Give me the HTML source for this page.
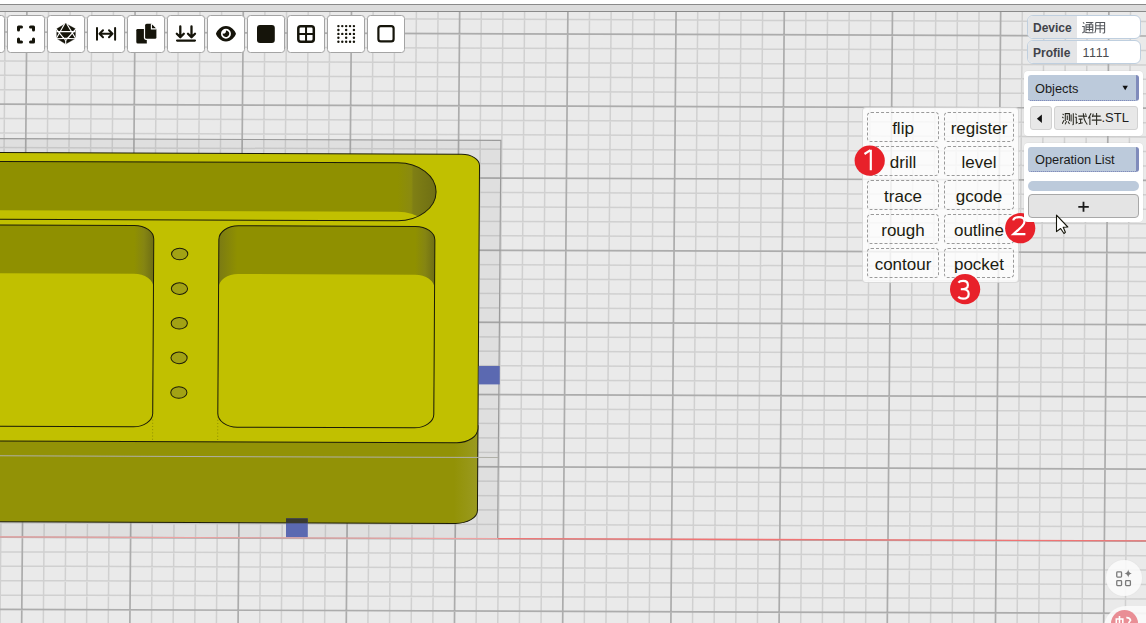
<!DOCTYPE html>
<html><head><meta charset="utf-8">
<style>
*{box-sizing:border-box;margin:0;padding:0}
html,body{width:1146px;height:623px;overflow:hidden;background:#eaeaea;font-family:"Liberation Sans",sans-serif;position:relative}
.abs{position:absolute}
#topband{left:0;top:0;width:1146px;height:12px;background:#fff}
#topband div{position:absolute;left:0;width:1146px}
.tb{position:absolute;top:15px;width:38px;height:38px;background:#fff;border:1px solid #a4a4a4;border-radius:3.5px}
.tb svg{position:absolute;left:0;top:0}
#menu{left:862px;top:107px;width:157px;height:176px;background:rgba(255,255,255,0.8);border:1px solid rgba(0,0,0,0.13);border-radius:4px}
.mb{position:absolute;height:30px;border:1px dashed #9a9a9a;border-radius:4px;font-size:17px;color:#1c1c10;text-align:center;line-height:32px}
.num{position:absolute;width:30px;height:30px;border-radius:50%;background:#e8202a;color:#fff;font-size:27px;line-height:30px;text-align:center}
.pnl{position:absolute;background:#fff;border-radius:4px}
.hdr{position:absolute;background:#bccadb;border-right:3px solid #7f8bbb;border-bottom:1px dotted #6a76b0;border-radius:3px;font-size:13.5px;color:#1a1a1a;line-height:25px;padding-left:7px}
</style></head><body>
<svg class="abs" style="left:0;top:0" width="1146" height="623">
<path d="M5.34 0L0.04 623 M48.62 0L43.32 623 M70.25 0L64.96 623 M91.90 0L86.60 623 M113.53 0L108.24 623 M156.81 0L151.52 623 M178.46 0L173.16 623 M200.09 0L194.80 623 M221.73 0L216.44 623 M265.02 0L259.72 623 M286.66 0L281.36 623 M308.30 0L303.00 623 M329.94 0L324.64 623 M373.22 0L367.92 623 M394.86 0L389.56 623 M416.50 0L411.20 623 M438.14 0L432.84 623 M481.42 0L476.12 623 M503.06 0L497.76 623 M524.70 0L519.40 623 M546.34 0L541.04 623 M589.62 0L584.32 623 M611.25 0L605.96 623 M632.90 0L627.60 623 M654.54 0L649.24 623 M697.82 0L692.52 623 M719.46 0L714.16 623 M741.10 0L735.80 623 M762.74 0L757.44 623 M806.01 0L800.72 623 M827.66 0L822.36 623 M849.30 0L844.00 623 M870.94 0L865.64 623 M914.22 0L908.92 623 M935.86 0L930.56 623 M957.50 0L952.20 623 M979.14 0L973.84 623 M1022.42 0L1017.12 623 M1044.06 0L1038.76 623 M1065.69 0L1060.40 623 M1087.34 0L1082.04 623 M1130.62 0L1125.32 623 M1152.25 0L1146.96 623 M0 17.58L1146 21.59 M0 46.44L1146 50.46 M0 60.88L1146 64.89 M0 75.31L1146 79.32 M0 89.75L1146 93.76 M0 118.61L1146 122.63 M0 133.05L1146 137.06 M0 147.48L1146 151.49 M0 161.92L1146 165.93 M0 190.78L1146 194.79 M0 205.22L1146 209.23 M0 219.65L1146 223.66 M0 234.09L1146 238.10 M0 262.95L1146 266.97 M0 277.39L1146 281.40 M0 291.82L1146 295.83 M0 306.26L1146 310.27 M0 335.12L1146 339.14 M0 349.56L1146 353.57 M0 363.99L1146 368.00 M0 378.43L1146 382.44 M0 407.29L1146 411.31 M0 421.73L1146 425.74 M0 436.16L1146 440.17 M0 450.60L1146 454.61 M0 479.46L1146 483.48 M0 493.90L1146 497.91 M0 508.33L1146 512.34 M0 522.77L1146 526.78 M0 551.63L1146 555.64 M0 566.07L1146 570.08 M0 580.50L1146 584.51 M0 594.94L1146 598.95 M0 623.80L1146 627.82" stroke="#d0d0d0" stroke-width="1.5" fill="none"/>
<path d="M26.98 0L21.68 623 M135.18 0L129.88 623 M243.38 0L238.08 623 M351.58 0L346.28 623 M459.78 0L454.48 623 M567.98 0L562.68 623 M676.18 0L670.88 623 M784.38 0L779.08 623 M892.58 0L887.28 623 M1000.78 0L995.48 623 M1108.97 0L1103.68 623 M0 32.01L1146 36.02 M0 104.18L1146 108.19 M0 176.35L1146 180.36 M0 248.52L1146 252.53 M0 320.69L1146 324.70 M0 392.86L1146 396.87 M0 465.03L1146 469.04 M0 537.20L1146 541.21 M0 609.37L1146 613.38" stroke="#acacac" stroke-width="1.7" fill="none"/>


<defs>
<clipPath id="cslot"><path d="M-30 162.3L397.0 162.3A38.45 28.94999999999999 0 0 1 397.0 220.2L-30 220.2Z"/></clipPath>
<clipPath id="clp"><path d="M-30 225.8L133.9 225.8A19.5 13.7 0 0 1 153.4 239.5L153.4 413.5A19.5 13.7 0 0 1 133.9 427.2L-30 427.2Z"/></clipPath>
<clipPath id="crp"><path d="M218.5 239.5A19.5 13.7 0 0 1 238.0 225.8L415.0 225.8A19.5 13.7 0 0 1 434.5 239.5L434.5 413.5A19.5 13.7 0 0 1 415.0 427.2L238.0 427.2A19.5 13.7 0 0 1 218.5 413.5Z"/></clipPath>
<linearGradient id="gslot" x1="397" x2="436" y1="0" y2="0" gradientUnits="userSpaceOnUse">
<stop offset="0" stop-color="#8f9000"/><stop offset="0.35" stop-color="#8a8a10"/><stop offset="0.4" stop-color="#7f7f14"/><stop offset="1" stop-color="#6e6e14"/></linearGradient>
<linearGradient id="glp" x1="134" x2="153.5" y1="0" y2="0" gradientUnits="userSpaceOnUse">
<stop offset="0" stop-color="#8f9000"/><stop offset="0.5" stop-color="#858512"/><stop offset="1" stop-color="#6e6e14"/></linearGradient>
<linearGradient id="grp" x1="415" x2="434.8" y1="0" y2="0" gradientUnits="userSpaceOnUse">
<stop offset="0" stop-color="#8f9000"/><stop offset="0.5" stop-color="#858512"/><stop offset="1" stop-color="#6e6e14"/></linearGradient>
<linearGradient id="grp2" x1="218" x2="237" y1="0" y2="0" gradientUnits="userSpaceOnUse">
<stop offset="0" stop-color="#7a7a14"/><stop offset="1" stop-color="#8f9000"/></linearGradient>
<linearGradient id="gfront" x1="455" x2="478.5" y1="0" y2="0" gradientUnits="userSpaceOnUse">
<stop offset="0" stop-color="#929206"/><stop offset="1" stop-color="#9a9a20"/></linearGradient>
<radialGradient id="ghole" cx="0.55" cy="0.6" r="0.6"><stop offset="0" stop-color="#a8a820"/><stop offset="1" stop-color="#989810"/></radialGradient>
</defs>
<path d="M-30 138.55L500.9 140.4L497.6 538.9L-30 537.0Z" fill="#000" fill-opacity="0.045"/>
<path d="M-30 138.55L500.9 140.4L497.6 538.9" fill="none" stroke="#9a9a9a" stroke-width="1.1"/>
<g transform="matrix(1,0.0035,-0.006,1,1.800,-0.875)">
<path d="M-30 425L478.7 425L478.7 509.70000000000005A22 13 0 0 1 456.7 522.7L-30 522.7Z" fill="url(#gfront)" stroke="#1c1c08" stroke-width="1"/>
<path d="M-30 456.7L499 456.7" stroke="#b0b0a8" stroke-width="1"/>
<path d="M-30 153.5L460.7 153.5A18 11.2 0 0 1 478.7 164.7L478.7 427.6A21 14.3 0 0 1 457.7 441.9L-30 441.9Z" fill="#c1c000" stroke="#1c1c08" stroke-width="1"/>
<path d="M-30 162.3L397.0 162.3A38.45 28.94999999999999 0 0 1 397.0 220.2L-30 220.2Z" fill="url(#gslot)"/>
<path d="M-30 211.20000000000002L397.0 211.20000000000002A38.45 28.94999999999999 0 0 1 397.0 269.09999999999997L-30 269.09999999999997Z" fill="#c1c000" clip-path="url(#cslot)"/>
<path d="M-30 162.3L397.0 162.3A38.45 28.94999999999999 0 0 1 397.0 220.2L-30 220.2Z" fill="none" stroke="#1c1c08" stroke-width="1"/>
<path d="M-30 225.8L133.9 225.8A19.5 13.7 0 0 1 153.4 239.5L153.4 413.5A19.5 13.7 0 0 1 133.9 427.2L-30 427.2Z" fill="url(#glp)"/>
<path d="M-30 274.1L133.9 274.1A19.5 13.7 0 0 1 153.4 287.8L153.4 461.8A19.5 13.7 0 0 1 133.9 475.5L-30 475.5Z" fill="#c1c000" clip-path="url(#clp)"/>
<path d="M-30 225.8L133.9 225.8A19.5 13.7 0 0 1 153.4 239.5L153.4 413.5A19.5 13.7 0 0 1 133.9 427.2L-30 427.2Z" fill="none" stroke="#1c1c08" stroke-width="1"/>
<path d="M218.5 239.5A19.5 13.7 0 0 1 238.0 225.8L415.0 225.8A19.5 13.7 0 0 1 434.5 239.5L434.5 413.5A19.5 13.7 0 0 1 415.0 427.2L238.0 427.2A19.5 13.7 0 0 1 218.5 413.5Z" fill="url(#grp)"/>
<path d="M218 226L237 226L237 300L218 300Z" fill="url(#grp2)" clip-path="url(#crp)"/>
<path d="M218.5 287.8A19.5 13.7 0 0 1 238.0 274.1L415.0 274.1A19.5 13.7 0 0 1 434.5 287.8L434.5 461.8A19.5 13.7 0 0 1 415.0 475.5L238.0 475.5A19.5 13.7 0 0 1 218.5 461.8Z" fill="#c1c000" clip-path="url(#crp)"/>
<path d="M218.5 239.5A19.5 13.7 0 0 1 238.0 225.8L415.0 225.8A19.5 13.7 0 0 1 434.5 239.5L434.5 413.5A19.5 13.7 0 0 1 415.0 427.2L238.0 427.2A19.5 13.7 0 0 1 218.5 413.5Z" fill="none" stroke="#1c1c08" stroke-width="1"/>
<ellipse cx="179.4" cy="254.25" rx="8.1" ry="5.8" fill="#a2a214" stroke="#1c1c08" stroke-width="1"/><ellipse cx="179.4" cy="288.87" rx="8.1" ry="5.8" fill="#a2a214" stroke="#1c1c08" stroke-width="1"/><ellipse cx="179.4" cy="323.49" rx="8.1" ry="5.8" fill="#a2a214" stroke="#1c1c08" stroke-width="1"/><ellipse cx="179.4" cy="358.11" rx="8.1" ry="5.8" fill="#a2a214" stroke="#1c1c08" stroke-width="1"/><ellipse cx="179.4" cy="392.73" rx="8.1" ry="5.8" fill="#a2a214" stroke="#1c1c08" stroke-width="1"/>
<path d="M153.4 413.5V441.5 M218.5 413.5V441.5" stroke="#50500a" stroke-opacity="0.55" stroke-width="0.8" stroke-dasharray="1 2.2"/>
</g>
<rect x="478.7" y="366" width="21" height="18.4" fill="#5b69b1"/>
<rect x="286" y="518.3" width="21.8" height="19" fill="#5b69b1"/>
<rect x="286" y="518.3" width="21.8" height="5" fill="#3a3a30"/>
<path d="M0 536.85L498 538.59" stroke="#eea2a2" stroke-width="1.2"/><path d="M498 538.59L1146 540.86" stroke="#f07474" stroke-width="1.3"/>

</svg>
<div id="topband" class="abs">
 <div style="top:4px;height:1px;background:#8a8a8a"></div>
 <div style="top:5px;height:6px;background:#dcdcdc"></div>
 <div style="top:11px;height:1px;background:#8a8a8a"></div>
</div>
<div class="tb" style="left:-33px"><svg width="36" height="36"><g transform="translate(0.5,0.5)"></g></svg></div>
<div class="tb" style="left:7px"><svg width="36" height="36"><g transform="translate(0.5,0.5)"><path d="M10 13.5v-3h3 M22 10.5h3v3 M25 22.5v3h-3 M13 25.5h-3v-3" fill="none" stroke="#15140a" stroke-width="3" stroke-linecap="round" stroke-linejoin="round"/></g></svg></div>
<div class="tb" style="left:47px"><svg width="36" height="36"><g transform="translate(0.5,0.5)"><g><path d="M17.2 7 L26.9 12.3 L26.9 22 L17.2 27.6 L8.2 22 L8.2 12.3Z" fill="#15140a" stroke="#15140a" stroke-width="0.3" stroke-linejoin="round"/><path d="M16 7.5 L7.5 22.5 M18.4 7.5 L27.5 22.5 M7.5 12.3 L17.2 24 L27.5 12.3 M8 15.1 H26.8 M8 22.3 Q17.2 21.5 27 22.3 M17.2 24 V28" stroke="#fff" stroke-width="1.15" fill="none"/></g></g></svg></div>
<div class="tb" style="left:87px"><svg width="36" height="36"><g transform="translate(0.5,0.5)"><path d="M8.5 11.5V23.3 M26.6 11.5V23.3 M11 17.3H24 M14.5 13.8L11 17.3L14.5 20.8 M20.5 13.8L24 17.3L20.5 20.8" fill="none" stroke="#15140a" stroke-width="2" stroke-linecap="round" stroke-linejoin="round"/></g></svg></div>
<div class="tb" style="left:127px"><svg width="36" height="36"><g transform="translate(0.5,0.5)"><path d="M9 12.6H18.3V26.9H9.3Q7.8 26.9 7.8 25.4V13.8Q7.8 12.6 9 12.6Z" fill="#15140a"/><path d="M17.6 6.2H23L29 12V21.6Q29 23.4 27.2 23.4H17.4Q15.4 23.4 15.4 21.6V8Q15.4 6.2 17.6 6.2Z" fill="#fff"/><path d="M18.2 7.3H22.9L27.9 12.4V20.9Q27.9 22.3 26.5 22.3H18Q16.6 22.3 16.6 20.9V8.8Q16.6 7.3 18.2 7.3Z" fill="#15140a"/><path d="M22.9 7.2V12.4H28" fill="none" stroke="#fff" stroke-width="1.1"/><path d="M23.9 8.4L27 11.5H23.9Z" fill="#15140a"/></g></svg></div>
<div class="tb" style="left:167px"><svg width="36" height="36"><g transform="translate(0.5,0.5)"><path d="M11.8 10V20.5 M8.3 17.2L11.8 20.7L15.3 17.2 M23 10V20.5 M19.5 17.2L23 20.7L26.5 17.2 M8.6 24.05H26.4" fill="none" stroke="#15140a" stroke-width="2.3" stroke-linecap="round" stroke-linejoin="round"/></g></svg></div>
<div class="tb" style="left:207px"><svg width="36" height="36"><g transform="translate(0.5,0.5)"><path transform="translate(7.5,8.39) scale(0.03455)" d="M288 32c-80.8 0-145.5 36.8-192.6 80.6C48.6 156 17.3 208 2.5 243.7c-3.3 7.9-3.3 16.7 0 24.6C17.3 304 48.6 356 95.4 399.4C142.5 443.2 207.2 480 288 480s145.5-36.8 192.6-80.6c46.8-43.5 78.1-95.4 93-131.1c3.3-7.9 3.3-16.7 0-24.6c-14.9-35.7-46.2-87.7-93-131.1C433.5 68.8 368.8 32 288 32zM144 256a144 144 0 1 1 288 0 144 144 0 1 1 -288 0zm144-64c0 35.3-28.7 64-64 64c-7.1 0-13.9-1.2-20.3-3.3c-5.5-1.8-11.9 1.6-11.7 7.4c.3 6.9 1.3 13.8 3.2 20.7c13.7 51.2 66.4 81.6 117.6 67.9s81.6-66.4 67.9-117.6c-11.1-41.5-47.8-69.4-88.6-71.1c-5.8-.2-9.2 6.1-7.4 11.7c2.1 6.4 3.3 13.2 3.3 20.3z" fill="#15140a"/></g></svg></div>
<div class="tb" style="left:247px"><svg width="36" height="36"><g transform="translate(0.5,0.5)"><rect x="8.5" y="8.6" width="17.8" height="17.8" rx="3" fill="#15140a"/></g></svg></div>
<div class="tb" style="left:287px"><svg width="36" height="36"><g transform="translate(0.5,0.5)"><rect x="9.8" y="9.8" width="15.5" height="15.4" rx="2.4" fill="none" stroke="#15140a" stroke-width="2.5"/><path d="M17.55 9.8V25.2 M9.8 17.5H25.3" stroke="#15140a" stroke-width="2"/></g></svg></div>
<div class="tb" style="left:327px"><svg width="36" height="36"><g transform="translate(0.5,0.5)"><circle cx="9.90" cy="9.60" r="1.2" fill="#15140a"/><circle cx="13.78" cy="9.60" r="1.2" fill="#15140a"/><circle cx="17.66" cy="9.60" r="1.2" fill="#15140a"/><circle cx="21.54" cy="9.60" r="1.2" fill="#15140a"/><circle cx="25.42" cy="9.60" r="1.2" fill="#15140a"/><circle cx="9.90" cy="13.50" r="1.2" fill="#15140a"/><circle cx="17.66" cy="13.50" r="1.2" fill="#15140a"/><circle cx="25.42" cy="13.50" r="1.2" fill="#15140a"/><circle cx="9.90" cy="17.40" r="1.2" fill="#15140a"/><circle cx="13.78" cy="17.40" r="1.2" fill="#15140a"/><circle cx="17.66" cy="17.40" r="1.2" fill="#15140a"/><circle cx="21.54" cy="17.40" r="1.2" fill="#15140a"/><circle cx="25.42" cy="17.40" r="1.2" fill="#15140a"/><circle cx="9.90" cy="21.30" r="1.2" fill="#15140a"/><circle cx="17.66" cy="21.30" r="1.2" fill="#15140a"/><circle cx="25.42" cy="21.30" r="1.2" fill="#15140a"/><circle cx="9.90" cy="25.20" r="1.2" fill="#15140a"/><circle cx="13.78" cy="25.20" r="1.2" fill="#15140a"/><circle cx="17.66" cy="25.20" r="1.2" fill="#15140a"/><circle cx="21.54" cy="25.20" r="1.2" fill="#15140a"/><circle cx="25.42" cy="25.20" r="1.2" fill="#15140a"/></g></svg></div>
<div class="tb" style="left:367px"><svg width="36" height="36"><g transform="translate(0.5,0.5)"><rect x="9.9" y="9.7" width="15.2" height="15.1" rx="2.4" fill="none" stroke="#15140a" stroke-width="2.2"/></g></svg></div>
<div id="menu" class="abs"></div>
<div class="mb" style="left:867px;top:112px;width:72px">flip</div>
<div class="mb" style="left:944px;top:112px;width:70px">register</div>
<div class="mb" style="left:867px;top:146px;width:72px">drill</div>
<div class="mb" style="left:944px;top:146px;width:70px">level</div>
<div class="mb" style="left:867px;top:180px;width:72px">trace</div>
<div class="mb" style="left:944px;top:180px;width:70px">gcode</div>
<div class="mb" style="left:867px;top:214px;width:72px">rough</div>
<div class="mb" style="left:944px;top:214px;width:70px">outline</div>
<div class="mb" style="left:867px;top:248px;width:72px">contour</div>
<div class="mb" style="left:944px;top:248px;width:70px">pocket</div>
<svg class="abs" style="left:0;top:0" width="1146" height="623"><circle cx="869.7" cy="160.6" r="15.1" fill="#e8212a"/><path transform="translate(869.7,160.6)" d="M-5.2 -6.6L0.7 -10.4M1.1 -10.8V9.6" fill="none" stroke="#fff" stroke-width="2.15" stroke-linejoin="miter"/><circle cx="1020.2" cy="228.2" r="15.1" fill="#e8212a"/><path transform="translate(1020.2,228.2)" d="M-7 -7.8C-6.5 -10.3 -4.5 -11.1 -1.2 -11.1C2.2 -11.1 4.3 -9.5 4.3 -6.8C4.3 -4 2 -1.8 -6.7 5.9H5.2" fill="none" stroke="#fff" stroke-width="2.15" stroke-linejoin="miter"/><circle cx="965.1" cy="289.15" r="15.1" fill="#e8212a"/><path transform="translate(965.1,289.15)" d="M-6.7 -6.5C-5.7 -7.8 -4 -8.2 -2 -8.2C1 -8.2 2.8 -6.5 2.8 -4C2.8 -1.5 1 0.1 -4.3 0.1H-2C1.5 0.1 3.6 2 3.6 4.8C3.6 7.8 1.5 9.5 -2 9.5C-4 9.5 -5.7 8.8 -6.9 7.7" fill="none" stroke="#fff" stroke-width="2.15" stroke-linejoin="miter"/></svg>

<div class="abs" style="left:1027px;top:14.9px;width:114px;height:23.8px;border:1px solid #bfcfdf;border-radius:6px;background:#fff;overflow:hidden">
 <div class="abs" style="left:0;top:0;width:49px;height:22px;background:#e4e5e7"></div>
 <div class="abs" style="left:5px;top:5.5px;font-size:12px;font-weight:bold;color:#41434a;line-height:14px">Device</div>
</div>
<div class="abs" style="left:1027px;top:40.1px;width:114px;height:23.8px;border:1px solid #bfcfdf;border-radius:6px;background:#fff;overflow:hidden">
 <div class="abs" style="left:0;top:0;width:49px;height:22px;background:#e4e5e7"></div>
 <div class="abs" style="left:5px;top:4.6px;font-size:12px;font-weight:bold;color:#41434a;line-height:14px">Profile</div>
 <div class="abs" style="left:54.5px;top:5.2px;font-size:12.6px;color:#4a4c50;line-height:14px;letter-spacing:0.55px">1111</div>
</div>
<svg class="abs" style="left:1082px;top:22px" width="26" height="13"><g fill="none" stroke="#54575c" stroke-width="1.05">
<path d="M1 0.4L2.3 1.7 M0.2 4.4H2.2V9.6L0.4 11 M2.4 9.9Q4 10.8 6 10.8H11.6 M4 0.5H10.3L8.5 1.8 M4 9.6V2.7H10.8V8.8Q10.8 9.3 10 9.3 M4 5.1H10.8 M4 7.4H10.8 M7.4 1.8V9.3"/>
<path d="M13.7 0.5V7Q13.7 9.5 12.8 11 M13.7 0.5H22.6V10.4Q22.6 10.9 21.6 10.9H20.6 M13.7 3.8H22.6 M13.7 6.8H22.6 M18.1 0.5V11"/>
</g></svg>
<div class="pnl" style="left:1024px;top:70.6px;width:119px;height:65.6px;box-shadow:0 0 0 0.5px rgba(0,0,0,0.06)"></div>
<div class="hdr" style="left:1028px;top:75px;width:111px;height:25.7px;line-height:27px;font-size:12.8px">Objects</div>
<svg class="abs" style="left:1121px;top:84px" width="9" height="8"><path d="M1.5 1.8H6.9L4.2 6.3Z" fill="#111"/></svg>
<div class="abs" style="left:1029.5px;top:106.4px;width:22px;height:24px;background:#e8e8e8;border:1px solid #d2d2d2;border-radius:3px"></div>
<svg class="abs" style="left:1035px;top:113px" width="9" height="12"><path d="M6.9 1.4V9.9L1.9 5.65Z" fill="#111"/></svg>
<div class="abs" style="left:1054.3px;top:106.4px;width:83.5px;height:24px;background:#e8e8e8;border:1px solid #d2d2d2;border-radius:3px;font-size:13px;color:#1e1e1e;line-height:22px;padding-left:46.2px">.STL</div>
<svg class="abs" style="left:1061.5px;top:112.8px" width="41" height="13"><g fill="none" stroke="#2a2a22" stroke-width="1.05">
<path d="M0.6 0.8L1.8 2 M0.3 4L1.5 5.1 M0.2 10.8L2 7.2 M3.3 8V0.6H7.4V8 M5.3 2.5V7 M4.6 8.2L3.1 11.4 M6.1 8.5L7.5 11 M9.1 1.6V8.6 M11.3 0.2V11.2Q11.3 11.8 10.4 11.6"/>
<path d="M13.4 0.6L14.6 1.8 M12.8 4.2H14.3V10.2L15.6 9.1 M16.2 3.1H25 M16.7 6.1H20.5 M18.6 6.1V10.2 M16.5 10.7L20.8 9.8 M21.3 0.2Q21.5 7 25.3 11.5 M23.1 0.6L24.2 1.6"/>
<path d="M29.1 0.2L26.3 5.4 M27.9 3.6V11.9 M31.3 0.6L30.3 4 M30.8 3.1H38.7 M29.8 7.1H39.6 M34.6 0V11.9"/>
</g></svg>
<div class="pnl" style="left:1023.5px;top:142.6px;width:119.5px;height:79.4px;box-shadow:0 0 0 0.5px rgba(0,0,0,0.06)"></div>
<div class="hdr" style="left:1028px;top:147px;width:110.8px;height:24.8px;line-height:25px;font-size:12.8px">Operation List</div>
<div class="abs" style="left:1028px;top:181px;width:110.8px;height:9.6px;background:#bccadb;border-radius:5px"></div>
<div class="abs" style="left:1028px;top:194.3px;width:110.6px;height:24px;background:#e4e4e4;border:1px solid #a8a8a8;border-radius:4px"></div>
<svg class="abs" style="left:1077px;top:200px" width="14" height="14"><path d="M6.5 1.8V11.8 M1.3 6.8H11.8" stroke="#1a1a1a" stroke-width="1.8"/></svg>
<svg class="abs" style="left:1055px;top:214px" width="16" height="22"><path d="M1.5 1.2V17.6L5.6 14.5L9 19.5L10.4 18.3L8.2 13.3L12.8 13Z" fill="#fff" stroke="#15150a" stroke-width="1.1" stroke-linejoin="round"/></svg>
<div class="abs" style="left:1106.2px;top:560px;width:36px;height:36px;border-radius:50%;background:rgba(250,250,250,0.88);box-shadow:0 0 2px rgba(0,0,0,0.05)"></div>
<svg class="abs" style="left:1110px;top:565px" width="28" height="28"><g fill="none" stroke="#7a7a7a" stroke-width="1.3"><rect x="6.75" y="6.95" width="4.8" height="5.1" rx="0.8"/><rect x="6.75" y="15.6" width="4.8" height="5.0" rx="0.8"/><rect x="15.6" y="15.6" width="4.8" height="5.0" rx="0.8"/></g><path d="M18.2 4.5Q18.7 8 21.8 8.5Q18.7 9 18.2 12.5Q17.7 9 14.6 8.5Q17.7 8 18.2 4.5Z" fill="#7a7a7a"/></svg>
<div class="abs" style="left:1104px;top:606.2px;width:70px;height:44px;border-radius:22px;background:rgba(250,250,250,0.92)"></div>
<div class="abs" style="left:1110.5px;top:610px;width:27.6px;height:27.6px;border-radius:50%;background:#e98e95"></div>
<svg class="abs" style="left:1100px;top:600px" width="46" height="23"><path d="M16.3 24V19H22.8V24 M19.5 16V24 M126.5 17.5" fill="none" stroke="#fff" stroke-width="1.6"/><path d="M26.3 17.6Q29.6 17.4 30.6 20.2L28.6 23" fill="none" stroke="#fff" stroke-width="1.6"/></svg>

</body></html>
